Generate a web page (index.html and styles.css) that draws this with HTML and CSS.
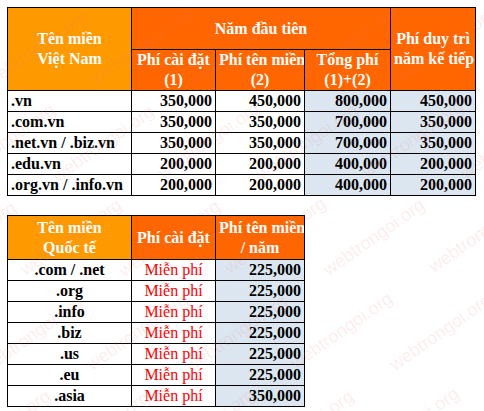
FILE: index.html
```html
<!DOCTYPE html>
<html lang="vi">
<head>
<meta charset="utf-8">
<title>Bảng giá tên miền</title>
<link rel="stylesheet" href="styles.css">
</head>
<body>
<div class="page">
  <table class="price vn">
    <colgroup>
      <col class="c1"><col class="c2"><col class="c3"><col class="c4"><col class="c5">
    </colgroup>
    <tr class="h1">
      <th rowspan="2" class="hl">Tên miền<br>Việt Nam</th>
      <th colspan="3" class="hd">Năm đầu tiên</th>
      <th rowspan="2" class="hd">Phí duy trì<br>năm kế tiếp</th>
    </tr>
    <tr class="h2">
      <th class="hd">Phí cài đặt<br>(1)</th>
      <th class="hd">Phí tên miền<br>(2)</th>
      <th class="hd">Tổng phí<br>(1)+(2)</th>
    </tr>
    <tr><td class="name">.vn</td><td class="num">350,000</td><td class="num">450,000</td><td class="num blue">800,000</td><td class="num blue">450,000</td></tr>
    <tr><td class="name">.com.vn</td><td class="num">350,000</td><td class="num">350,000</td><td class="num blue">700,000</td><td class="num blue">350,000</td></tr>
    <tr><td class="name">.net.vn / .biz.vn</td><td class="num">350,000</td><td class="num">350,000</td><td class="num blue">700,000</td><td class="num blue">350,000</td></tr>
    <tr><td class="name">.edu.vn</td><td class="num">200,000</td><td class="num">200,000</td><td class="num blue">400,000</td><td class="num blue">200,000</td></tr>
    <tr><td class="name">.org.vn / .info.vn</td><td class="num">200,000</td><td class="num">200,000</td><td class="num blue">400,000</td><td class="num blue">200,000</td></tr>
  </table>

  <table class="price intl">
    <colgroup>
      <col class="c1"><col class="c2"><col class="c3">
    </colgroup>
    <tr class="h3">
      <th class="hl">Tên miền<br>Quốc tế</th>
      <th class="hd">Phí cài đặt</th>
      <th class="hd">Phí tên miền<br>/ năm</th>
    </tr>
    <tr><td class="ctr">.com / .net</td><td class="free">Miễn phí</td><td class="num blue">225,000</td></tr>
    <tr><td class="ctr">.org</td><td class="free">Miễn phí</td><td class="num blue">225,000</td></tr>
    <tr><td class="ctr">.info</td><td class="free">Miễn phí</td><td class="num blue">225,000</td></tr>
    <tr><td class="ctr">.biz</td><td class="free">Miễn phí</td><td class="num blue">225,000</td></tr>
    <tr><td class="ctr">.us</td><td class="free">Miễn phí</td><td class="num blue">225,000</td></tr>
    <tr><td class="ctr">.eu</td><td class="free">Miễn phí</td><td class="num blue">225,000</td></tr>
    <tr><td class="ctr">.asia</td><td class="free">Miễn phí</td><td class="num blue">350,000</td></tr>
  </table>

  <div class="watermark" aria-hidden="true">
    <div class="wm-row">webtrongoi.org webtrongoi.org webtrongoi.org webtrongoi.org webtrongoi.org webtrongoi.org webtrongoi.org webtrongoi.org</div>
    <div class="wm-row">webtrongoi.org webtrongoi.org webtrongoi.org webtrongoi.org webtrongoi.org webtrongoi.org webtrongoi.org webtrongoi.org</div>
    <div class="wm-row">webtrongoi.org webtrongoi.org webtrongoi.org webtrongoi.org webtrongoi.org webtrongoi.org webtrongoi.org webtrongoi.org</div>
    <div class="wm-row">webtrongoi.org webtrongoi.org webtrongoi.org webtrongoi.org webtrongoi.org webtrongoi.org webtrongoi.org webtrongoi.org</div>
    <div class="wm-row">webtrongoi.org webtrongoi.org webtrongoi.org webtrongoi.org webtrongoi.org webtrongoi.org webtrongoi.org webtrongoi.org</div>
    <div class="wm-row">webtrongoi.org webtrongoi.org webtrongoi.org webtrongoi.org webtrongoi.org webtrongoi.org webtrongoi.org webtrongoi.org</div>
    <div class="wm-row">webtrongoi.org webtrongoi.org webtrongoi.org webtrongoi.org webtrongoi.org webtrongoi.org webtrongoi.org webtrongoi.org</div>
    <div class="wm-row">webtrongoi.org webtrongoi.org webtrongoi.org webtrongoi.org webtrongoi.org webtrongoi.org webtrongoi.org webtrongoi.org</div>
    <div class="wm-row">webtrongoi.org webtrongoi.org webtrongoi.org webtrongoi.org webtrongoi.org webtrongoi.org webtrongoi.org webtrongoi.org</div>
    <div class="wm-row">webtrongoi.org webtrongoi.org webtrongoi.org webtrongoi.org webtrongoi.org webtrongoi.org webtrongoi.org webtrongoi.org</div>
    <div class="wm-row">webtrongoi.org webtrongoi.org webtrongoi.org webtrongoi.org webtrongoi.org webtrongoi.org webtrongoi.org webtrongoi.org</div>
    <div class="wm-row">webtrongoi.org webtrongoi.org webtrongoi.org webtrongoi.org webtrongoi.org webtrongoi.org webtrongoi.org webtrongoi.org</div>
    <div class="wm-row">webtrongoi.org webtrongoi.org webtrongoi.org webtrongoi.org webtrongoi.org webtrongoi.org webtrongoi.org webtrongoi.org</div>
    <div class="wm-row">webtrongoi.org webtrongoi.org webtrongoi.org webtrongoi.org webtrongoi.org webtrongoi.org webtrongoi.org webtrongoi.org</div>
    <div class="wm-row">webtrongoi.org webtrongoi.org webtrongoi.org webtrongoi.org webtrongoi.org webtrongoi.org webtrongoi.org webtrongoi.org</div>
    <div class="wm-row">webtrongoi.org webtrongoi.org webtrongoi.org webtrongoi.org webtrongoi.org webtrongoi.org webtrongoi.org webtrongoi.org</div>
    <div class="wm-row">webtrongoi.org webtrongoi.org webtrongoi.org webtrongoi.org webtrongoi.org webtrongoi.org webtrongoi.org webtrongoi.org</div>
    <div class="wm-row">webtrongoi.org webtrongoi.org webtrongoi.org webtrongoi.org webtrongoi.org webtrongoi.org webtrongoi.org webtrongoi.org</div>
    <div class="wm-row">webtrongoi.org webtrongoi.org webtrongoi.org webtrongoi.org webtrongoi.org webtrongoi.org webtrongoi.org webtrongoi.org</div>
    <div class="wm-row">webtrongoi.org webtrongoi.org webtrongoi.org webtrongoi.org webtrongoi.org webtrongoi.org webtrongoi.org webtrongoi.org</div>
  </div>
</div>
</body>
</html>
```

FILE: styles.css
```css
html, body {
  margin: 0;
  padding: 0;
  background: #ffffff;
}

.page {
  position: relative;
  width: 484px;
  height: 411px;
  overflow: hidden;
  padding: 7px 0 0 7px;
  box-sizing: border-box;
  font-family: "Liberation Serif", "Times New Roman", serif;
  font-size: 16px;
  font-weight: bold;
  color: #000;
}

.price {
  border-collapse: collapse;
  table-layout: fixed;
  font-family: "Liberation Serif", "Times New Roman", serif;
}

.price.vn {
  width: 469px;
}

.price.intl {
  width: 298px;
  margin-top: 19px;
}

.c1 { width: 124px; }
.c2 { width: 84px; }
.c3 { width: 89px; }
.c4 { width: 86px; }
.c5 { width: 85px; }

.price th,
.price td {
  border: 1px solid #000;
  padding: 0 3px;
  font-family: "Liberation Serif", "Times New Roman", serif;
  font-size: 16px;
  font-weight: bold;
  line-height: 20px;
  white-space: nowrap;
  overflow: hidden;
}

.price th {
  color: #ffffff;
  text-align: center;
  vertical-align: middle;
}

.hl { background: #ff9900; }
.hd { background: #ff6600; }

.h1 th { height: 41px; }
.h2 th { height: 40px; }
.h3 th { height: 43px; }

.price td {
  height: 20px;
}

.name { text-align: left; padding-left: 2px; }
.num { text-align: right; }
.ctr { text-align: center; }
.price td.free {
  text-align: center;
  color: #ff0000;
  font-weight: normal;
}
.blue { background: #dce6f1; }

.watermark {
  position: absolute;
  left: -400px;
  top: -400px;
  width: 1284px;
  height: 1211px;
  overflow: hidden;
  pointer-events: none;
  transform: rotate(-35deg);
  transform-origin: 50% 50%;
  font-family: "Liberation Sans", Arial, sans-serif;
  font-weight: normal;
  font-size: 18px;
  color: rgba(235, 120, 120, 0.14);
}

.wm-row {
  white-space: nowrap;
  line-height: 22px;
  margin-bottom: 36px;
  word-spacing: 44px;
}

.wm-row:nth-child(even) {
  margin-left: -80px;
}
```
